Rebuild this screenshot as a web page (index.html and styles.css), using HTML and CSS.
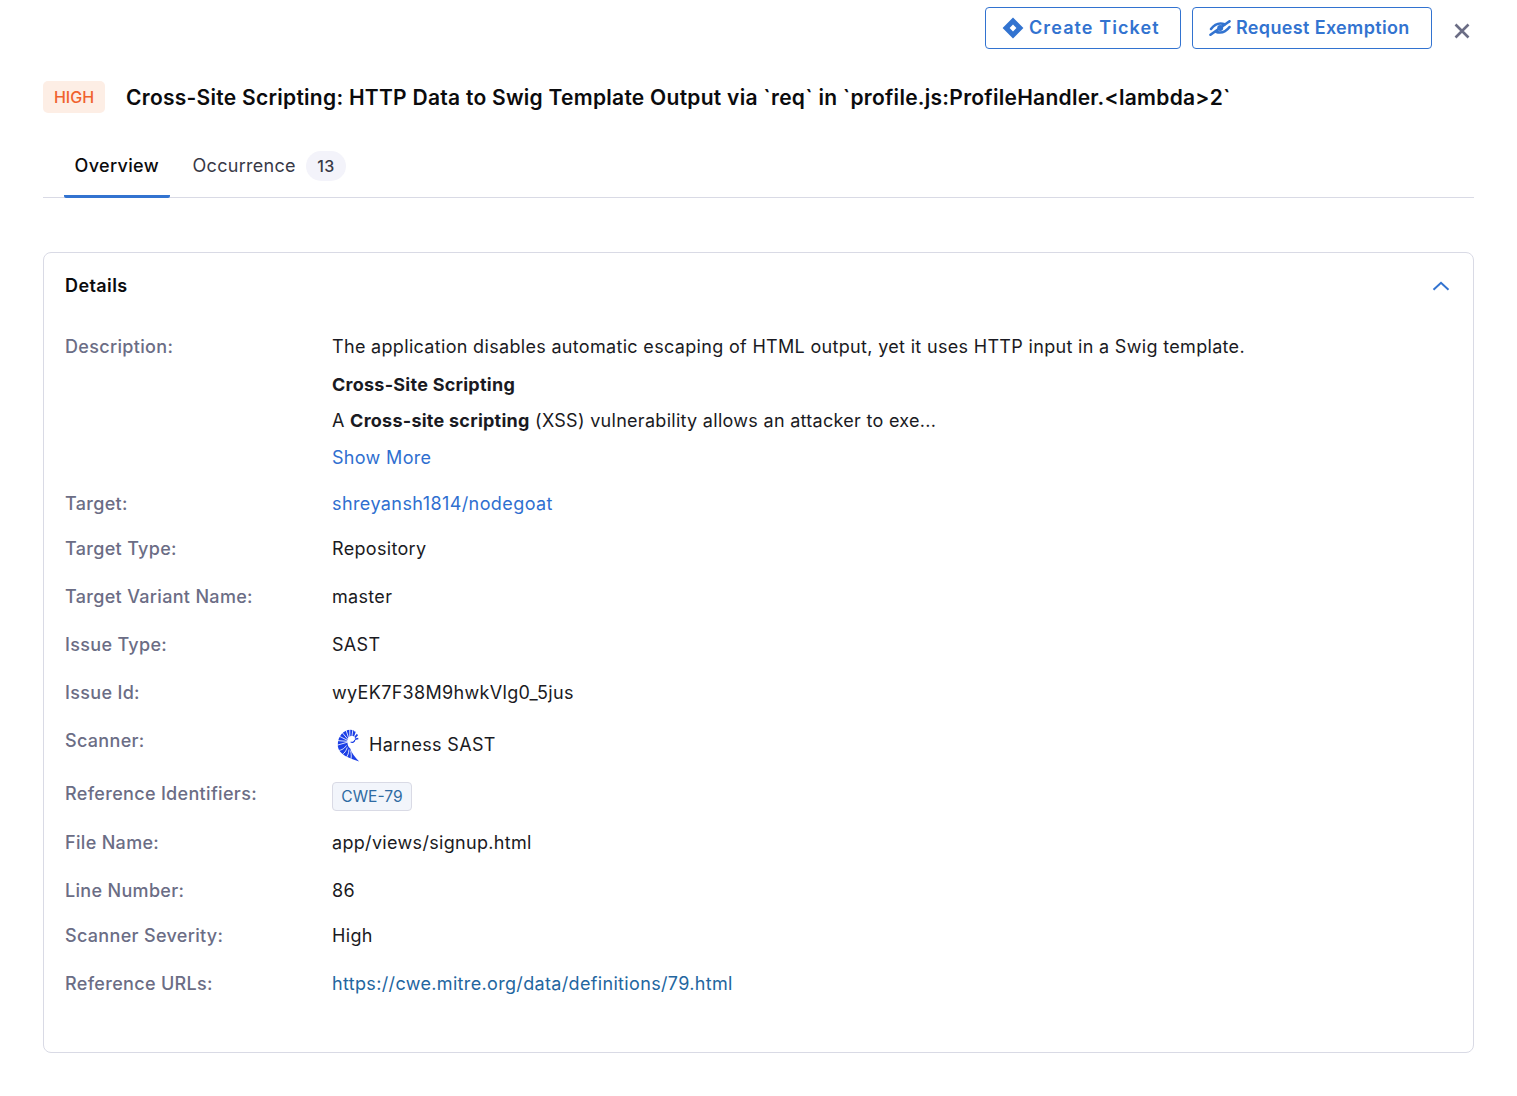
FILE: index.html
```html
<!DOCTYPE html>
<html lang="en">
<head>
<meta charset="utf-8">
<title>Issue details</title>
<link rel="stylesheet" href="styles.css">
</head>
<body>
<div class="page">
  <div class="actions">
    <button class="btn btn-ticket">
      <svg class="btn-icon" width="22" height="22" viewBox="0 0 22 22"><path fill="#3273d0" fill-rule="evenodd" d="M11 .6 21.4 11 11 21.4.6 11zM11 7.6 7.6 11 11 14.4 14.4 11z"/></svg>
      Create Ticket
    </button>
    <button class="btn btn-exempt">
      <svg class="btn-icon" width="22" height="16" viewBox="0 0 22 16"><g fill="none" stroke="#3273d0" stroke-width="2.6" stroke-linecap="round"><path d="M2 9C5 5 8 3.500 11.500 3.500c1.500 0 2.800.3 4 .8"/><path d="M20.500 7C17.500 11 14.500 12.500 11 12.500c-1.500 0-2.800-.3-4-.8"/><path d="M1.500 14.800 20.500 1.300"/></g><circle cx="11.200" cy="8" r="3" fill="#3273d0"/></svg>
      Request Exemption
    </button>
    <svg class="close" width="16" height="16" viewBox="0 0 16 16"><path d="M1.500 1.500 14.500 14.500M14.500 1.500 1.500 14.500" stroke="#6b6d85" stroke-width="2.600" fill="none"/></svg>
  </div>
  <div class="heading">
    <span class="badge">HIGH</span>
    <h1 class="title">Cross-Site Scripting: HTTP Data to Swig Template Output via `req` in `profile.js:ProfileHandler.&lt;lambda&gt;2`</h1>
  </div>
  <div class="tabs">
    <div class="tab tab-active">Overview</div>
    <div class="tab">Occurrence <span class="count">13</span></div>
  </div>
  <section class="card">
    <div class="card-head">
      <h2 class="card-title">Details</h2>
      <svg width="18" height="10" viewBox="0 0 18 10"><path d="M1.500 8.800 9 1.800l7.500 7" fill="none" stroke="#3273d0" stroke-width="2"/></svg>
    </div>
    <div class="rows">
      <div class="label">Description:</div>
      <div class="value desc">
        <p>The application disables automatic escaping of HTML output, yet it uses HTTP input in a Swig template.</p>
        <p class="desc-h"><b>Cross-Site Scripting</b></p>
        <p class="desc-t">A <b>Cross-site scripting</b> (XSS) vulnerability allows an attacker to exe...</p>
        <p class="desc-m"><a class="link">Show More</a></p>
      </div>
      <div class="label">Target:</div>
      <div class="value value-short"><a class="link link-wide">shreyansh1814/nodegoat</a></div>
      <div class="label">Target Type:</div>
      <div class="value">Repository</div>
      <div class="label">Target Variant Name:</div>
      <div class="value">master</div>
      <div class="label">Issue Type:</div>
      <div class="value">SAST</div>
      <div class="label">Issue Id:</div>
      <div class="value">wyEK7F38M9hwkVlg0_5jus</div>
      <div class="label">Scanner:</div>
      <div class="value scanner">
        <svg class="scanner-logo" width="23" height="33" viewBox="9 6.500 27 33" preserveAspectRatio="none">
          <path fill="#1c3fe6" d="M29 8C19 5 9 13 10 24C11 32 24 36 35 39C30 35 26 30 24.500 26C21 24 20.500 19 22 16C24 13 27 13.500 29 14Z"/>
          <g fill="none" stroke="#fff" stroke-width=".9"><path d="M24 19 24 5"/><path d="M24 19 19 6"/><path d="M24 19 14 9"/><path d="M24 19 10 13"/><path d="M24 19 8 18"/><path d="M24 19 8 23"/><path d="M20 23C17 27 13 28 9 28"/><path d="M21 25C19 30 16 32 13 33"/><path d="M23 27C23 31 21 34 19 36"/><path d="M25 28C26 32 26 35 25 38"/><path d="M28 5 26.500 14"/></g>
          <g fill="none" stroke="#1c3fe6"><path stroke-width="2" d="M30 9 28.500 13"/><path stroke-width="1.800" d="M33 12 30 15"/><path stroke-width="1.500" d="M34 16 30 16.800"/><path stroke-width="1.300" d="M30 17.500C29.500 19.500 27 20.500 25 19.500"/></g>
        </svg>
        <span class="scanner-name">Harness SAST</span>
      </div>
      <div class="label">Reference Identifiers:</div>
      <div class="value value-chip"><span class="chip">CWE-79</span></div>
      <div class="label">File Name:</div>
      <div class="value">app/views/signup.html</div>
      <div class="label">Line Number:</div>
      <div class="value value-short">86</div>
      <div class="label">Scanner Severity:</div>
      <div class="value">High</div>
      <div class="label">Reference URLs:</div>
      <div class="value"><a class="link-dark">https://cwe.mitre.org/data/definitions/79.html</a></div>
    </div>
  </section>
</div>
</body>
</html>
```
FILE: styles.css
```css
* { box-sizing: border-box; }
html, body { margin: 0; padding: 0; background: #fff; }
body { font-family: Inter, "Liberation Sans", sans-serif; color: #0b0b0d; height: 1096px; overflow: hidden; }
.page { padding: 7px 43px 0; }
.actions { display: flex; justify-content: flex-end; align-items: flex-start; gap: 11px; height: 42px; }
.btn {
  height: 42px; display: flex; align-items: center; gap: 5px;
  background: #fff; border: 1px solid #3273d0; border-radius: 4px; color: #3273d0;
  font: 600 18px Inter, sans-serif; padding: 0 0 2px 16px;
}
.btn-icon { margin-top: 2px; }
.btn-ticket { width: 196px; letter-spacing: 1.1px; }
.btn-exempt { width: 240px; letter-spacing: .35px; }
.close { margin: 16px 4px 0 11px; }
.heading { display: flex; align-items: center; gap: 21px; margin-top: 32px; height: 32px; }
.badge {
  width: 62px; height: 32px; display: flex; align-items: center; justify-content: center;
  background: #fdeee5; border-radius: 5px; color: #f0622e; font-size: 16px; font-weight: 500;
}
.title { margin: 0; font-size: 21px; font-weight: 600; letter-spacing: .27px; white-space: nowrap; }
.tabs { display: flex; gap: 12px; height: 85px; align-items: flex-end; border-bottom: 1px solid #d9dae5; padding-left: 21px; }
.tab { height: 48px; padding: 0 11px 17px; display: flex; align-items: center; gap: 10px; font-size: 18px; color: #383946; letter-spacing: .3px; margin-bottom: -1px; }
.tab-active { color: #0b0b0d; font-weight: 500; border-bottom: 3px solid #3273d0; border-radius: 2px; padding: 0 10.500px 14px; letter-spacing: .35px; }
.count { background: #f3f3fa; border-radius: 15px; width: 40px; height: 30px; display: flex; align-items: center; justify-content: center; font-size: 16px; font-weight: 500; }
.card { margin-top: 54px; height: 801px; border: 1px solid #d9dae5; border-radius: 8px; padding: 0 21px; }
.card-head { display: flex; justify-content: space-between; align-items: center; height: 65px; padding-right: 2px; }
.card-title { margin: 0; font-size: 18px; font-weight: 600; letter-spacing: .4px; }
.rows { display: grid; grid-template-columns: 267px 1fr; font-size: 18px; line-height: 24px; padding-top: 17px; }
.label { color: #6b6d85; font-weight: 500; font-size: 18px; letter-spacing: .32px; }
.value { min-height: 48px; color: #1a1a22; letter-spacing: .32px; }
.value-short { min-height: 45px; }
.value-chip { min-height: 49px; }
.desc p { margin: 0; }
.desc b { letter-spacing: .25px; }
.desc .desc-h { margin-top: 14px; }
.desc .desc-t { margin-top: 12px; letter-spacing: .29px; }
.desc .desc-m { margin-top: 13px; padding-bottom: 22px; }
.link { color: #2f6fd0; }
.link-wide { letter-spacing: .41px; }
.link-dark { color: #23669f; letter-spacing: .34px; }
.scanner { display: flex; align-items: flex-start; min-height: 53px; }
.scanner-logo { margin: 0 9px 0 5px; }
.scanner-name { margin-top: 4px; }
.chip { display: inline-flex; align-items: center; justify-content: center; width: 80px; height: 29px; background: #f2f5fb; border: 1px solid #d9dae5; border-radius: 4px; color: #2f6ba3; font-size: 15.6px; letter-spacing: 0; }
```
